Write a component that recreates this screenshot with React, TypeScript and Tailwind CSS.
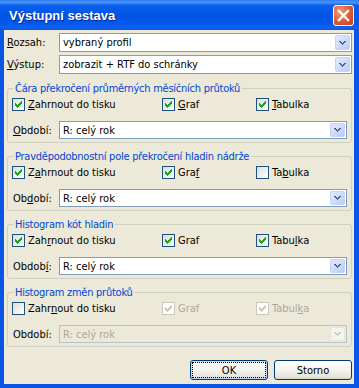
import React from "react";

const CHECK: number[][] = [[6], [5, 6], [0, 4, 5, 6], [0, 1, 3, 4, 5], [0, 1, 2, 3, 4], [1, 2, 3], [2]];
const CHEV: number[][] = [[0, 1, 5, 6], [1, 2, 4, 5], [2, 3, 4], [3]];

function Pix({ rows, w, h, color }: { rows: number[][]; w: number; h: number; color: string }) {
  return (
    <svg width={w} height={h} viewBox={`0 0 ${w} ${h}`} shapeRendering="crispEdges">
      {rows.flatMap((row, y) => row.map((x) => <rect key={`${x}-${y}`} x={x} y={y} width="1" height="1" fill={color} />))}
    </svg>
  );
}

function Checkbox({ checked, disabled }: { checked?: boolean; disabled?: boolean }) {
  return (
    <span
      className={
        disabled
          ? "flex h-[13px] w-[13px] shrink-0 items-center justify-center border border-[#CAC8BB] bg-white"
          : "flex h-[13px] w-[13px] shrink-0 items-center justify-center border border-[#1C5180] bg-[linear-gradient(135deg,#DCDCD7,#FFFFFF)]"
      }
    >
      {checked && <Pix rows={CHECK} w={7} h={7} color={disabled ? "#CAC8BB" : "#21A121"} />}
    </span>
  );
}

function Combo({ text, tall, disabled }: { text: string; tall?: boolean; disabled?: boolean }) {
  return (
    <div
      className={
        (tall ? "h-[19px] " : "h-[18px] ") +
        (disabled
          ? "flex min-w-0 flex-1 items-stretch border border-[#B5C2D4] bg-[#ECE9D8] p-[1px] text-[#ACA899]"
          : "flex min-w-0 flex-1 items-stretch border border-[#7F9DB9] bg-white p-[1px]")
      }
    >
      <span className="flex flex-1 items-center pl-[2px] whitespace-nowrap">{text}</span>
      <span
        className={
          disabled
            ? "flex w-[15px] items-center justify-center rounded-[2px] border border-[#E8E6DC] bg-[#F4F3EE]"
            : "flex w-[15px] items-center justify-center rounded-[2px] border border-[#C4D3F6] bg-[linear-gradient(135deg,#E3EBFF,#B9CCF8)]"
        }
      >
        <Pix rows={CHEV} w={7} h={4} color={disabled ? "#C9C7BA" : "#4D6185"} />
      </span>
    </div>
  );
}

type Item = { label: React.ReactNode; checked: boolean; disabled?: boolean };

function Group({
  title,
  items,
  period,
  selectDisabled,
  first,
}: {
  title: string;
  items: [Item, Item, Item];
  period: React.ReactNode;
  selectDisabled?: boolean;
  first?: boolean;
}) {
  const widths = ["w-[150px]", "w-[94px]", "flex-1"];
  return (
    <fieldset
      className={
        (first ? "mt-[8px] " : "mt-[7px] ") +
        "rounded-[3px] border border-[#D0D0BF] pr-[4px] pb-[3px] pl-[4px]"
      }
    >
      <legend className="ml-[1px] px-[2px] text-[11px] leading-[13px] tracking-[-0.25px] text-[#0046D5]">{title}</legend>
      <div className="mt-[2px] flex h-[15px] items-center">
        {items.map((it, i) => (
          <div key={i} className={widths[i] + " flex items-center gap-[3px]"}>
            <Checkbox checked={it.checked} disabled={it.disabled} />
            <span className={it.disabled ? "text-[#ACA899] whitespace-nowrap" : "whitespace-nowrap"}>{it.label}</span>
          </div>
        ))}
      </div>
      <div className="mt-[9px] flex items-center">
        <span className="w-[47px] shrink-0 pl-[1px]">{period}</span>
        <Combo text="R: celý rok" disabled={selectDisabled} />
      </div>
    </fieldset>
  );
}

function XPButton({ children, focused }: { children: React.ReactNode; focused?: boolean }) {
  return (
    <button
      className={
        focused
          ? "h-[20px] w-[78px] rounded-[3px] border border-[#003C74] bg-[linear-gradient(to_bottom,#FFFFFF,#F3F2EC_55%,#E5E2D6_90%,#D6D0C5)] p-[1px] shadow-[inset_0_0_0_1px_#C0D6F8]"
          : "h-[20px] w-[78px] rounded-[3px] border border-[#003C74] bg-[linear-gradient(to_bottom,#FFFFFF,#F3F2EC_55%,#E5E2D6_90%,#D6D0C5)] p-[1px]"
      }
    >
      <span
        className={
          focused
            ? "flex h-full items-center justify-center border border-dotted border-black text-[11px] leading-none"
            : "flex h-full items-center justify-center text-[11px] leading-none"
        }
      >
        {children}
      </span>
    </button>
  );
}

export default function App() {
  return (
    <div className="flex h-[388px] w-[359px] flex-col bg-[#0A55E3] font-['Tahoma','DejaVu_Sans_Condensed','Liberation_Sans',sans-serif] text-[11px] leading-[13px] text-black">
      <div className="flex h-[30px] shrink-0 items-center justify-between bg-[linear-gradient(to_bottom,#2F7CF2_0%,#4A94FA_8%,#0A5FEC_18%,#0055E5_50%,#0358EC_80%,#0E63F2_92%,#0A55E3_100%)] pr-[5px] pl-[9px]">
        <span className="pt-[1px] font-['Liberation_Sans',sans-serif] text-[13px] font-bold text-white [text-shadow:1px_1px_0_#0A2590]">
          Výstupní sestava
        </span>
        <span className="flex h-[21px] w-[21px] items-center justify-center rounded-[3px] border border-white bg-[radial-gradient(circle_at_30%_30%,#F09A7C,#DC5A33_55%,#C23F1A)]">
          <svg width="13" height="13" viewBox="0 0 13 13">
            <path d="M2 2 L11 11 M11 2 L2 11" stroke="white" strokeWidth="2.4" strokeLinecap="square" />
          </svg>
        </span>
      </div>
      <div className="mr-[5px] mb-[4px] ml-[4px] flex flex-1 flex-col bg-[#ECE9D8] pt-[3px] pr-[2px] pl-[3px]">
        <div className="flex items-center">
          <span className="w-[52px] shrink-0">
            <u>R</u>ozsah:
          </span>
          <Combo text="vybraný profil" tall />
        </div>
        <div className="mt-[3px] flex items-center">
          <span className="w-[52px] shrink-0">
            <u>V</u>ýstup:
          </span>
          <Combo text="zobrazit + RTF do schránky" tall />
        </div>

        <Group
          first
          title="Čára překročení průměrných měsíčních průtoků"
          items={[
            { label: <><u>Z</u>ahrnout do tisku</>, checked: true },
            { label: <><u>G</u>raf</>, checked: true },
            { label: <><u>T</u>abulka</>, checked: true },
          ]}
          period={<><u>O</u>bdobí:</>}
        />
        <Group
          title="Pravděpodobnostní pole překročení hladin nádrže"
          items={[
            { label: <>Z<u>a</u>hrnout do tisku</>, checked: true },
            { label: <>Gra<u>f</u></>, checked: true },
            { label: <>Ta<u>b</u>ulka</>, checked: false },
          ]}
          period={<>Ob<u>d</u>obí:</>}
        />
        <Group
          title="Histogram kót hladin"
          items={[
            { label: <>Zah<u>r</u>nout do tisku</>, checked: true },
            { label: <>Graf</>, checked: true },
            { label: <>Tabu<u>l</u>ka</>, checked: true },
          ]}
          period={<>Obdob<u>í</u>:</>}
        />
        <Group
          title="Histogram změn průtoků"
          items={[
            { label: <>Zahr<u>n</u>out do tisku</>, checked: false },
            { label: <>Graf</>, checked: true, disabled: true },
            { label: <>Tabul<u>k</u>a</>, checked: true, disabled: true },
          ]}
          period={<>Období:</>}
          selectDisabled
        />

        <div className="mt-[13px] flex justify-end gap-[6px]">
          <XPButton focused>OK</XPButton>
          <XPButton>Storno</XPButton>
        </div>
      </div>
    </div>
  );
}
